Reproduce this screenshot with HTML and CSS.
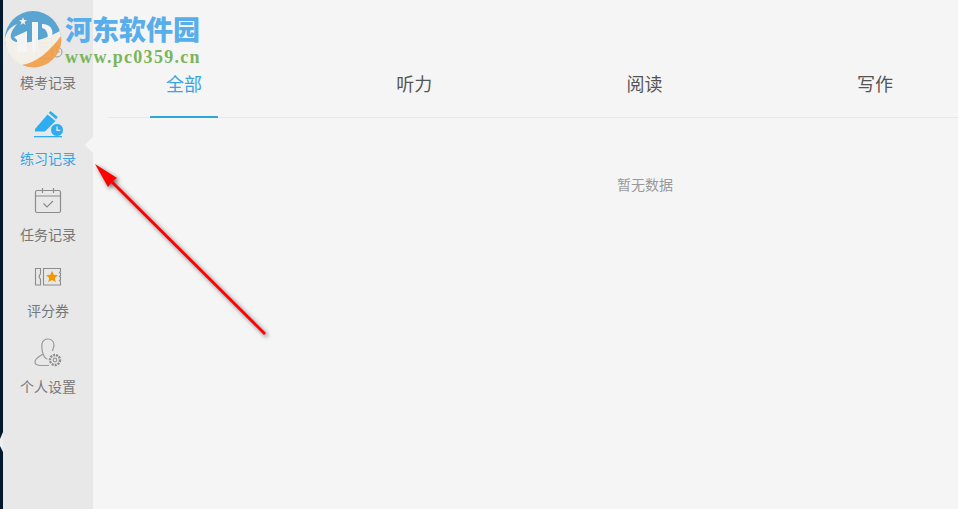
FILE: index.html
```html
<!DOCTYPE html>
<html lang="zh-CN">
<head>
<meta charset="UTF-8">
<title>练习记录</title>
<link rel="stylesheet" href="styles.css">
</head>
<body>
<div class="strip"></div>
<div class="sidebar">
  <a class="nav-item">
    <span class="nav-icon">
      <svg width="30" height="26" viewBox="0 0 30 26" fill="none" stroke="#999" stroke-width="1">
        <path d="M3.500 3.500h15v20h-15z"/><path d="M6 8h10M6 12h8"/><circle cx="24" cy="17" r="5"/><path d="M24 14.500v2.500h2.500"/>
      </svg>
    </span>
    <span>模考记录</span>
  </a>
  <a class="nav-item active">
    <span class="nav-icon">
      <svg width="30" height="28" viewBox="0 0 30 28">
        <path d="M2 19 14.500 4.500 22.500 11 12 21.500H2z" fill="#2eaef0"/>
        <path d="M15.800 3 17.500 1 24.800 7 23 9.200z" fill="#2eaef0"/>
        <circle cx="24" cy="20" r="6.500" fill="#2eaef0" stroke="#e8e8e8" stroke-width="1"/>
        <path d="M24 16.500v3.800h3.300" fill="none" stroke="#e8e8e8" stroke-width="1.300"/>
        <rect x="1" y="26" width="28" height="1.300" fill="#2eaef0"/>
      </svg>
    </span>
    <span>练习记录</span>
  </a>
  <a class="nav-item">
    <span class="nav-icon">
      <svg width="28" height="27" viewBox="0 0 28 27" fill="none" stroke="#8c8c8c" stroke-width="1.200">
        <rect x="1.500" y="3.500" width="25" height="22" rx="1.500"/>
        <path d="M1.500 9h25M8.500 1v5M19.500 1v5"/>
        <path d="M9.500 16.500l3.500 3.500 6-6"/>
      </svg>
    </span>
    <span>任务记录</span>
  </a>
  <a class="nav-item">
    <span class="nav-icon ticket">
      <svg width="28" height="20" viewBox="0 0 28 20" fill="none" stroke="#8c8c8c" stroke-width="1.100">
        <path d="M1.500 1.500h5v5l-1.500 3 1.500 3v5.500h-5z"/>
        <path d="M9.500 1.500h17v3l-1 1 1 1v2l-1 1 1 1v2l-1 1 1 1v3.500h-17z"/>
        <path d="M18 3.800l1.800 4 4.200.400-3.200 2.800 1 4.200-3.800-2.200-3.800 2.200 1-4.200-3.200-2.800 4.200-.400z" fill="#f39800" stroke="none"/>
      </svg>
    </span>
    <span>评分券</span>
  </a>
  <a class="nav-item">
    <span class="nav-icon">
      <svg width="28" height="29" viewBox="0 0 28 29" fill="none" stroke="#999" stroke-width="1.200">
        <path d="M13.500 21c-2 0-3-2-4-4-1-2-1.500-4-1.500-6 0-2-.5-3 0-5 .5-3 3-5 6-5s6 2.500 6 5.500c0 2.500-1 4.500-1.500 6.500"/>
        <path d="M9 16c-3 2-8 4-8 8 0 3 3 3.500 6 3.500h8"/>
        <circle cx="21" cy="22" r="5" stroke-width="2.400" stroke-dasharray="2 1" stroke="#8c8c8c"/>
        <circle cx="21" cy="22" r="1.800"/>
      </svg>
    </span>
    <span>个人设置</span>
  </a>
</div>
<div class="main">
  <div class="tabs">
    <div class="tab active">全部</div>
    <div class="tab">听力</div>
    <div class="tab">阅读</div>
    <div class="tab">写作</div>
  </div>
  <div class="empty">暂无数据</div>
</div>

<!-- watermark over the top left corner -->
<div class="watermark">
  <svg class="wm-logo" width="58" height="58" viewBox="0 0 58 58">
    <circle cx="29" cy="28" r="28" fill="#4f9fd0"/>
    <path d="M57 24A28 28 0 0 1 18 54C32 50 46 40 57 24z" fill="#f2a04a"/>
    <path d="M1 28c1-7 5-12 12-15-5 6-7 10-6 14 2 7 24 7 49-7l1 5C46 40 32 52 18 54 8 50 1 40 1 28z" fill="#f4f1ea"/>
    <path d="M10 26l13-6v21H13V29z" fill="#f7f7f7"/>
    <path d="M28 11h6v30h-6z" fill="#f7f7f7"/>
    <path d="M38 13c8 0 12 5 10 12l-5 5c2-6 0-12-5-13z" fill="#f7f7f7"/>
    <path d="M19 6l1 3 3 .200-2.400 1.800.900 3-2.500-1.800-2.500 1.800.900-3L15 9.200l3-.200z" fill="#f4f1ea"/>
  </svg>
  <div class="wm-text">
    <div class="wm-name">河东软件园</div>
    <div class="wm-url">www.pc0359.cn</div>
  </div>
</div>

<!-- red annotation arrow -->
<svg class="arrow" width="958" height="509" viewBox="0 0 958 509">
  <path d="M95 164 117 178 113 181 266 333 264 335 111 183 108 187z" fill="#ff0000"/>
</svg>
</body>
</html>
```

FILE: styles.css
```css
html, body {
  height: 100%;
}
body {
  margin: 0;
  display: flex;
  height: 509px;
  overflow: hidden;
  font-family: "Noto Sans CJK SC", "Liberation Sans", sans-serif;
  background-color: #f5f5f5;
}
.strip {
  position: relative;
  width: 3px;
  flex: none;
  background-color: #011a30;
}
.strip::after {
  content: "";
  position: absolute;
  left: 0;
  top: 432px;
  width: 3px;
  height: 20px;
  background-color: #eeeeee;
  clip-path: polygon(100% 0, 100% 100%, 0 70%, 0 35%);
}
.sidebar {
  width: 90px;
  flex: none;
  padding-top: 31px;
  box-sizing: border-box;
  background-color: #e8e8e8;
}
.nav-item {
  position: relative;
  display: flex;
  flex-direction: column;
  align-items: center;
  height: 76px;
  font-size: 14px;
  line-height: 20px;
  color: #777;
}
.nav-icon {
  display: flex;
  align-items: center;
  justify-content: center;
  height: 34px;
  margin-bottom: 7px;
}
.nav-icon.ticket {
  padding-top: 2px;
  height: 32px;
}
.nav-item.active {
  color: #3aa3e3;
}
.nav-item.active::after {
  content: "";
  position: absolute;
  right: 0;
  top: 30px;
  border-top: 8px solid transparent;
  border-bottom: 8px solid transparent;
  border-right: 8px solid #f5f5f5;
}
.main {
  flex: 1;
  padding-left: 15px;
}
.tabs {
  display: flex;
  gap: 162.300px;
  height: 118px;
  padding-top: 50px;
  padding-left: 42px;
  box-sizing: border-box;
  border-bottom: 1px solid #e8e8e8;
}
.tab {
  width: 68px;
  height: 68px;
  box-sizing: border-box;
  text-align: center;
  font-size: 18px;
  line-height: 66px;
  color: #555;
}
.tab.active {
  color: #3aa3e3;
  border-bottom: 2px solid #2ea7e0;
}
.empty {
  margin-top: 56px;
  margin-left: 509px;
  font-size: 14px;
  line-height: 20px;
  color: #999;
}
.watermark {
  position: absolute;
  left: 4px;
  top: 11px;
  display: flex;
}
.wm-logo {
  opacity: 0.92;
}
.wm-text {
  margin-left: 3px;
}
.wm-name {
  font-size: 27px;
  line-height: 36px;
  font-weight: 900;
  color: #57aeea;
  white-space: nowrap;
}
.wm-url {
  font-family: "Liberation Serif", serif;
  font-size: 18px;
  line-height: 20px;
  font-weight: bold;
  letter-spacing: 1.300px;
  color: #7ab55c;
  white-space: nowrap;
}
.arrow {
  position: absolute;
  left: 0;
  top: 0;
  filter: drop-shadow(2px 2px 2px rgba(0, 0, 0, 0.55));
}
```
